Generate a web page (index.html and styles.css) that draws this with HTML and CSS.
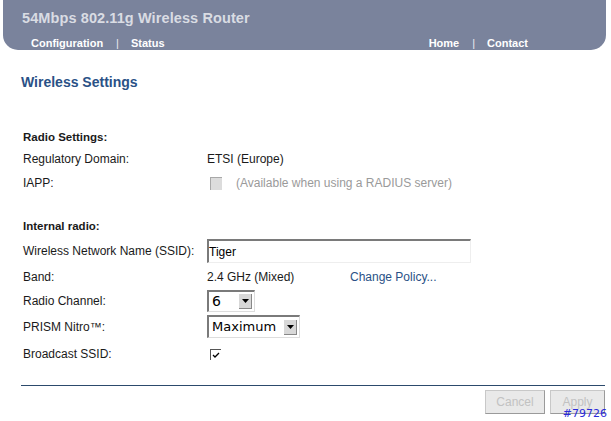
FILE: index.html
```html
<!DOCTYPE html>
<html>
<head>
<meta charset="utf-8">
<link rel="stylesheet" href="styles.css">
</head>
<body>
<header class="topbar">
  <div class="brand">54Mbps 802.11g Wireless Router</div>
  <nav class="nav">
    <div class="nav-group">
      <span class="nav-link">Configuration</span><span class="sep">|</span><span class="nav-link">Status</span>
    </div>
    <div class="nav-group right">
      <span class="nav-link">Home</span><span class="sep">|</span><span class="nav-link">Contact</span>
    </div>
  </nav>
</header>

<main class="content">
  <h1 class="page-title">Wireless Settings</h1>

  <section class="group group-radio">
    <div class="row head"><span class="label bold">Radio Settings:</span></div>
    <div class="row r-reg"><span class="label">Regulatory Domain:</span><span class="value">ETSI (Europe)</span></div>
    <div class="row r-iapp"><span class="label">IAPP:</span>
      <span class="value"><span class="check disabled"></span><span class="muted">(Available when using a RADIUS server)</span></span>
    </div>
  </section>

  <section class="group group-internal">
    <div class="row head"><span class="label bold">Internal radio:</span></div>
    <div class="row r-ssid"><span class="label">Wireless Network Name (SSID):</span>
      <span class="value"><span class="textbox">Tiger</span></span>
    </div>
    <div class="row r-band"><span class="label">Band:</span>
      <span class="value band"><span>2.4 GHz (Mixed)</span><span class="link">Change Policy...</span></span>
    </div>
    <div class="row r-chan"><span class="label">Radio Channel:</span>
      <span class="value"><span class="select sel-chan"><span class="sel-text">6</span><span class="sel-btn"><svg width="7" height="4" viewBox="0 0 7 4"><path d="M0 0h7L3.5 4z" fill="#000"/></svg></span></span></span>
    </div>
    <div class="row r-nitro"><span class="label">PRISM Nitro™:</span>
      <span class="value"><span class="select sel-nitro"><span class="sel-text">Maximum</span><span class="sel-btn"><svg width="7" height="4" viewBox="0 0 7 4"><path d="M0 0h7L3.5 4z" fill="#000"/></svg></span></span></span>
    </div>
    <div class="row r-bcast"><span class="label">Broadcast SSID:</span>
      <span class="value"><span class="check checked"><svg width="8" height="6" viewBox="0 0 8 6"><path d="M1 3l2 2 4-4" fill="none" stroke="#000" stroke-width="1.3"/></svg></span></span>
    </div>
  </section>

  <footer class="actions">
    <span class="btn">Cancel</span>
    <span class="btn">Apply</span>
    <span class="tag">#79726</span>
  </footer>
</main>
</body>
</html>
```
FILE: styles.css
```css
html, body {
  margin: 0;
  padding: 0;
  background: #fff;
}
body {
  font-family: "Liberation Sans", Arial, sans-serif;
  font-size: 12px;
  color: #1a1a1a;
  width: 611px;
  height: 421px;
  overflow: hidden;
}
.topbar {
  margin: 0 5px 0 3px;
  height: 50px;
  background: #7a839c;
  border-radius: 0 0 15px 15px;
  box-sizing: border-box;
  padding-top: 9px;
}
.brand {
  padding-left: 19px;
  font-size: 14.5px;
  font-weight: bold;
  color: #d9dce3;
  line-height: 18px;
  letter-spacing: 0.1px;
}
.nav {
  display: flex;
  justify-content: space-between;
  margin-top: 9px;
  padding: 0 78px 0 28px;
  font-size: 11px;
  font-weight: bold;
  color: #fff;
  line-height: 14px;
}
.nav-group { display: flex; }
.sep {
  font-weight: normal;
  color: #e8eaf0;
  margin: 0 12px 0 13px;
}
.content {
  padding: 0 6px 0 21px;
  position: relative;
}
.page-title {
  margin: 24px 0 0 0;
  font-size: 14px;
  line-height: 16px;
  font-weight: bold;
  color: #2a5186;
}
.group { padding-left: 2px; }
.group-radio { margin-top: 36px; }
.group-internal { margin-top: 19px; }
.row {
  display: grid;
  grid-template-columns: 184px 1fr;
  align-items: center;
  height: 22px;
}
.label { white-space: nowrap; }
.bold { font-weight: bold; font-size: 11.5px; }
.value {
  display: flex;
  align-items: center;
  white-space: nowrap;
}
.r-iapp { height: 26px; }
.r-ssid { height: 28px; }
.r-band { height: 24px; }
.r-chan { height: 23px; }
.r-nitro { height: 29px; }
.r-bcast { height: 26px; }

.check {
  width: 10px;
  height: 10px;
  margin-left: 3px;
  display: inline-flex;
  align-items: center;
  justify-content: center;
  box-sizing: border-box;
}
.check.disabled {
  width: 12px;
  height: 13px;
  background: #dcdcdc;
  border-left: 1px solid #a8a8a8;
  border-top: 1px solid #a8a8a8;
}
.check.checked {
  width: 11px;
  height: 11px;
  border-left: 1px solid #555;
  border-top: 1px solid #555;
  background: #fff;
}
.muted { color: #9a9a9a; margin-left: 14px; }
.textbox {
  width: 264px;
  height: 24px;
  box-sizing: border-box;
  border-top: 2px solid #7a7a7a;
  border-left: 2px solid #7a7a7a;
  border-right: 1px solid #eee;
  border-bottom: 1px solid #eee;
  display: flex;
  align-items: center;
  padding-left: 0;
  color: #000;
}
.band span:first-child { width: 143px; }
.link { color: #2a5186; }
.select {
  display: inline-flex;
  align-items: center;
  box-sizing: border-box;
  border-top: 2px solid #7a7a7a;
  border-left: 2px solid #7a7a7a;
  border-right: 1px solid #ddd;
  border-bottom: 1px solid #ddd;
  background: #fff;
  color: #000;
  font-family: "DejaVu Sans", sans-serif;
  padding-right: 2px;
}
.sel-chan { width: 48px; height: 22px; font-size: 14px; }
.sel-nitro { width: 93px; height: 23px; font-size: 13px; }
.sel-text { flex: 1; padding-left: 3px; line-height: 16px; }
.sel-btn {
  width: 13px;
  height: 15px;
  background: #d8d8d8;
  display: flex;
  align-items: center;
  justify-content: center;
  border-right: 1px solid #888;
  border-bottom: 1px solid #888;
  box-sizing: border-box;
}
.actions {
  margin-top: 18px;
  border-top: 1px solid #2c4a6c;
  display: flex;
  justify-content: flex-end;
  gap: 5px;
  padding-top: 4px;
  position: relative;
}
.btn {
  width: 60px;
  height: 24px;
  box-sizing: border-box;
  background: #e9e9e9;
  border: 1px solid #c8c8c8;
  border-right-color: #9a9a9a;
  border-bottom-color: #9a9a9a;
  color: #c2c2c2;
  display: flex;
  align-items: center;
  justify-content: center;
  font-size: 12px;
}
.btn + .btn { width: 55px; }
.tag {
  position: absolute;
  right: -2px;
  top: 22px;
  color: #2a2ad8;
  font-family: "DejaVu Sans", sans-serif;
  font-size: 11px;
  line-height: 11px;
}
```
